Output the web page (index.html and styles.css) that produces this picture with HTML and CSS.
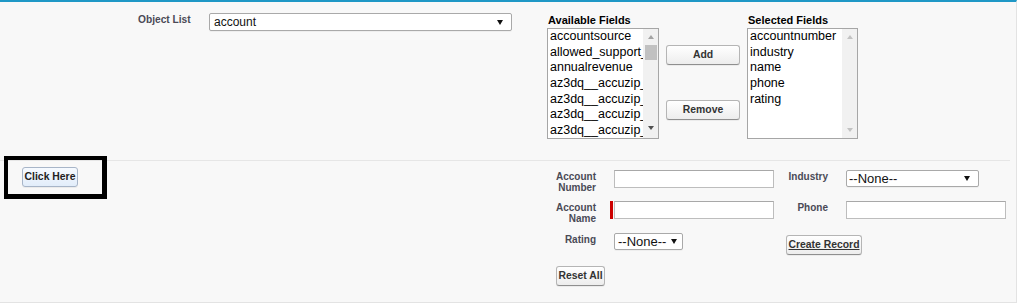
FILE: index.html
```html
<!DOCTYPE html>
<html lang="en">
<head>
<meta charset="utf-8">
<title>Record Builder</title>
<link rel="stylesheet" href="styles.css">
</head>
<body>
<div class="panel">
  <div class="top">
    <label class="obj-label">Object List</label>
    <div class="select select-object"><span class="select-text">account</span><i class="caret"></i></div>

    <div class="fieldcol avail">
      <div class="col-title">Available Fields</div>
      <div class="listbox">
        <ul class="items">
          <li>accountsource</li>
          <li>allowed_support_</li>
          <li>annualrevenue</li>
          <li>az3dq__accuzip_</li>
          <li>az3dq__accuzip_</li>
          <li>az3dq__accuzip_</li>
          <li>az3dq__accuzip_</li>
        </ul>
        <div class="scrollbar">
          <i class="sb-btn"><i class="tri-up"></i></i>
          <i class="sb-thumb"></i>
          <i class="sb-btn sb-btn-down"><i class="tri-down dark"></i></i>
        </div>
      </div>
    </div>

    <div class="movebtns">
      <button class="btn btn-move">Add</button>
      <button class="btn btn-move btn-remove">Remove</button>
    </div>

    <div class="fieldcol selected">
      <div class="col-title">Selected Fields</div>
      <div class="listbox listbox-sel">
        <ul class="items">
          <li>accountnumber</li>
          <li>industry</li>
          <li>name</li>
          <li>phone</li>
          <li>rating</li>
        </ul>
        <div class="scrollbar">
          <i class="sb-btn"><i class="tri-up light"></i></i>
          <i class="sb-btn sb-btn-down2"><i class="tri-down light"></i></i>
        </div>
      </div>
    </div>
  </div>

  <div class="bottom">
    <div class="launch">
      <button class="btn btn-blue">Click Here</button>
    </div>
    <div class="form">
      <div class="lbl">Account<br>Number</div>
      <div class="fld"><div class="input"></div></div>
      <div class="lbl">Industry</div>
      <div class="fld"><div class="select select-industry"><span class="select-text">--None--</span><i class="caret"></i></div></div>

      <div class="lbl">Account<br>Name</div>
      <div class="fld"><div class="required"><div class="input"></div></div></div>
      <div class="lbl">Phone</div>
      <div class="fld"><div class="input"></div></div>

      <div class="lbl">Rating</div>
      <div class="fld"><div class="select select-rating"><span class="select-text">--None--</span><i class="caret"></i></div></div>
      <div class="create"><button class="btn btn-create">Create Record</button></div>

      <div class="reset"><button class="btn btn-reset">Reset All</button></div>
    </div>
  </div>

  <div class="highlight"></div>
</div>
</body>
</html>
```
FILE: styles.css
```css
html, body {
  margin: 0;
  padding: 0;
  background: #ffffff;
}

body {
  font-family: "Liberation Sans", Arial, sans-serif;
  color: #000;
}

.panel {
  position: relative;
  width: 1017px;
  height: 303px;
  box-sizing: border-box;
  background: #f8f8f8;
  border-top: 2px solid #1f98c6;
  border-right: 1px solid #e3e3e3;
  border-bottom: 1px solid #e3e3e3;
}

/* ---------- top section ---------- */
.top {
  height: 158px;
  box-sizing: border-box;
  padding-top: 11px;
  display: flex;
  align-items: flex-start;
}

.obj-label {
  margin-left: 138px;
  width: 71px;
  font-weight: bold;
  font-size: 10.2px;
  line-height: 12px;
  color: #4a4a56;
  padding-top: 1px;
  white-space: nowrap;
}

.select {
  display: flex;
  align-items: center;
  justify-content: space-between;
  box-sizing: border-box;
  background: #fff;
  border: 1px solid #a9a9a9;
  border-radius: 2px;
  box-shadow: 0 1px 0 rgba(0, 0, 0, 0.04);
  padding: 0 8px 0 3px;
}

.select-text {
  font-size: 13px;
  line-height: 15px;
  color: #111;
  white-space: nowrap;
}

.select-object {
  width: 303px;
  height: 18px;
  padding-left: 4px;
}

.select-object .select-text {
  font-size: 12px;
}

.caret {
  width: 0;
  height: 0;
  border-left: 3px solid transparent;
  border-right: 3px solid transparent;
  border-top: 5px solid #111;
}

.fieldcol {
  display: flex;
  flex-direction: column;
}

.avail {
  margin-left: 35px;
}

.selected {
  margin-left: 7px;
}

.col-title {
  font-weight: bold;
  font-size: 11px;
  line-height: 15px;
  padding-left: 1px;
  color: #000;
  white-space: nowrap;
}

.listbox {
  width: 112px;
  height: 111px;
  box-sizing: border-box;
  border: 1px solid #a6a6a6;
  background: #fff;
  display: flex;
}

.listbox-sel {
  width: 111px;
}

.items {
  list-style: none;
  margin: 0;
  padding: 0 0 0 2px;
  flex: 1;
  overflow: hidden;
  font-size: 12.5px;
  line-height: 15.67px;
  color: #000;
  white-space: nowrap;
}

.scrollbar {
  width: 15px;
  background: #f1f1f1;
  display: flex;
  flex-direction: column;
  align-items: center;
}

.sb-btn {
  width: 15px;
  height: 15px;
  display: flex;
  align-items: center;
  justify-content: center;
}

.sb-btn-down {
  margin-top: auto;
  margin-bottom: 3px;
}

.sb-btn-down2 {
  margin-top: auto;
  margin-bottom: 1px;
}

.sb-thumb {
  width: 12px;
  height: 15px;
  margin-top: 1px;
  background: #c1c1c1;
}

.tri-up {
  width: 0;
  height: 0;
  border-left: 3.5px solid transparent;
  border-right: 3.5px solid transparent;
  border-bottom: 4px solid #a3a3a3;
}

.tri-up.light {
  border-bottom-color: #c2c2c2;
}

.tri-down {
  width: 0;
  height: 0;
  border-left: 3.5px solid transparent;
  border-right: 3.5px solid transparent;
  border-top: 4px solid #c2c2c2;
}

.tri-down.dark {
  border-top-color: #505050;
}

.movebtns {
  margin-left: 7px;
  margin-top: 32px;
  display: flex;
  flex-direction: column;
}

/* ---------- buttons ---------- */
.btn {
  height: 20px;
  box-sizing: border-box;
  padding: 0;
  font-family: "Liberation Sans", Arial, sans-serif;
  font-weight: bold;
  font-size: 10.4px;
  line-height: 12px;
  white-space: nowrap;
  color: #333;
  background: linear-gradient(#ffffff, #ededed);
  border: 1px solid #b5b5b5;
  border-bottom-color: #8f8f8f;
  border-radius: 3px;
  box-shadow: 0 1px 0 rgba(0, 0, 0, 0.05);
  cursor: pointer;
}

.btn-move {
  width: 74px;
}

.btn-remove {
  margin-top: 35px;
}

.btn-blue {
  width: 56px;
  color: #222;
  background: linear-gradient(#f6faff, #e2edfa);
  border-color: #a7b5c8;
}

.btn-create {
  width: 76px;
  text-decoration: underline;
}

.btn-reset {
  width: 49px;
}

/* ---------- bottom section ---------- */
.bottom {
  height: 141px;
  border-top: 1px solid #e6e6e6;
  margin-right: 6px;
  display: flex;
  align-items: flex-start;
}

.launch {
  flex: 0 0 549px;
  box-sizing: border-box;
  padding: 5px 0 0 22px;
}

.form {
  margin-top: 9px;
  display: grid;
  grid-template-columns: 65px 160px 72px 160px;
  grid-template-rows: 31px 32px 32px auto;
}

.lbl {
  text-align: right;
  padding-right: 18px;
  padding-top: 1px;
  font-weight: bold;
  font-size: 10px;
  line-height: 11px;
  color: #4a4a56;
  white-space: nowrap;
}

.input {
  width: 160px;
  height: 18px;
  box-sizing: border-box;
  background: #fff;
  border: 1px solid #bdbdbd;
  border-top-color: #a8a8a8;
}

.required {
  margin-left: -4px;
  width: 160px;
  height: 18px;
  border-left: 3px solid #c00;
  padding-left: 1px;
  display: flex;
  align-items: stretch;
}

.select-industry {
  width: 133px;
  height: 17px;
  padding-left: 2px;
}

.select-rating {
  width: 69px;
  height: 17px;
  padding-left: 3px;
  padding-right: 5px;
}

.create {
  grid-column: 3 / 5;
  padding-left: 12px;
  padding-top: 1px;
}

.reset {
  grid-column: 1 / 3;
  padding-left: 7px;
}

/* annotation box drawn over the page */
.highlight {
  position: absolute;
  left: 4px;
  top: 154px;
  width: 103px;
  height: 43px;
  box-sizing: border-box;
  border: 4px solid #000;
  border-bottom-width: 5px;
  border-right-width: 5px;
}
```
